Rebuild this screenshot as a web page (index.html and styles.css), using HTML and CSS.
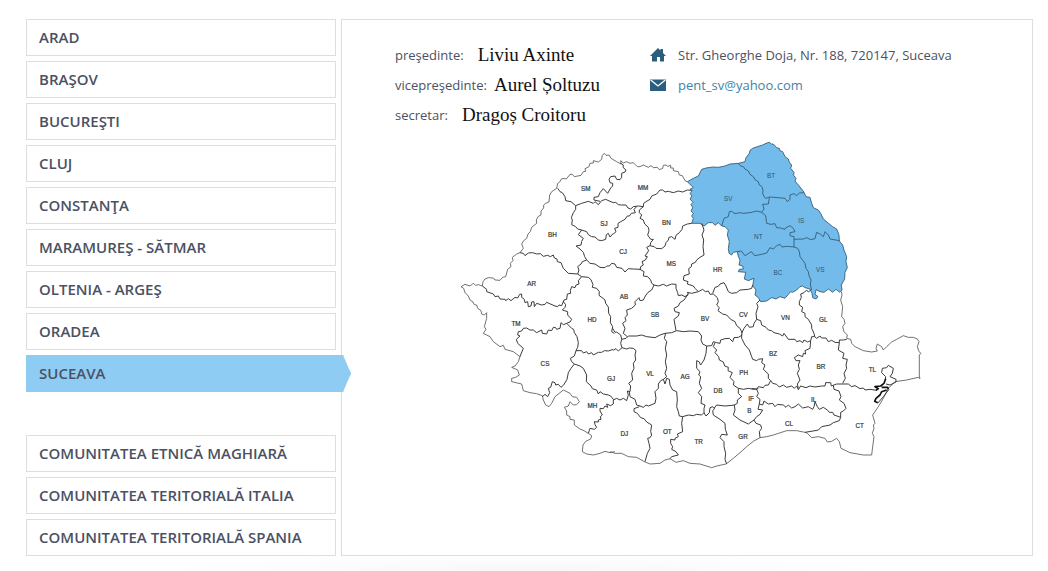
FILE: index.html
```html
<!DOCTYPE html>
<html lang="ro">
<head>
<meta charset="utf-8">
<meta name="viewport" content="width=device-width, initial-scale=1">
<title>Comunități - Suceava</title>
<link rel="stylesheet" href="styles.css">
</head>
<body>
<div class="page">
  <nav class="menu" aria-label="Comunități">
    <ul class="menu-list">
      <li><a class="menu-item" href="#arad">ARAD</a></li>
      <li><a class="menu-item" href="#brasov">BRAŞOV</a></li>
      <li><a class="menu-item" href="#bucuresti">BUCUREŞTI</a></li>
      <li><a class="menu-item" href="#cluj">CLUJ</a></li>
      <li><a class="menu-item" href="#constanta">CONSTANŢA</a></li>
      <li><a class="menu-item" href="#maramures">MARAMUREŞ - SĂTMAR</a></li>
      <li><a class="menu-item" href="#oltenia">OLTENIA - ARGEŞ</a></li>
      <li><a class="menu-item" href="#oradea">ORADEA</a></li>
      <li><a class="menu-item active" href="#suceava" aria-current="page">SUCEAVA</a></li>
    </ul>
    <ul class="menu-list">
      <li><a class="menu-item" href="#maghiara">COMUNITATEA ETNICĂ MAGHIARĂ</a></li>
      <li><a class="menu-item" href="#italia">COMUNITATEA TERITORIALĂ ITALIA</a></li>
      <li><a class="menu-item" href="#spania">COMUNITATEA TERITORIALĂ SPANIA</a></li>
    </ul>
  </nav>
  <main class="panel">
    <div class="info">
      <dl class="people">
        <div class="person"><dt>preşedinte:</dt><dd>Liviu Axinte</dd></div>
        <div class="person close"><dt>vicepreşedinte:</dt><dd>Aurel Șoltuzu</dd></div>
        <div class="person"><dt>secretar:</dt><dd>Dragoș Croitoru</dd></div>
      </dl>
      <address class="contact">
        <div class="contact-row">
          <svg class="icon" viewBox="0 0 16 14" aria-hidden="true"><path d="M8 0 10.5 2.4V1H13V5L16 8H14V13.5H10V9H7V13.5H2V8H0Z"/></svg>
          <span>Str. Gheorghe Doja, Nr. 188, 720147, Suceava</span>
        </div>
        <div class="contact-row">
          <svg class="icon" viewBox="0 0 16 14" aria-hidden="true"><path d="M0 1.5H16V13H0Z"/><path class="flap" d="M.7 2 8 8 15.3 2"/></svg>
          <a href="mailto:pent_sv@yahoo.com">pent_sv@yahoo.com</a>
        </div>
      </address>
    </div>
    <svg class="map" viewBox="0 0 1410 999" role="img" aria-label="Harta județelor">
      <!-- north-east counties -->
      <g transform="translate(825 -15)">
        <path class="region" d="M-128 140-110 130-95 123-85 103-72 99-52 96-35 97-15 93 0 87 25 85 45 80 48 68 58 55 60 46 68 40 85 34 98 30 108 25 118 22 124 27 130 27 140 38 148 40 150 47 158 50 165 65 175 72 178 82 185 90 182 100 192 112 191 121 198 130 195 138 205 150 215 162 222 172 228 185 240 187 245 205 250 218 265 225 272 235 280 252 292 262 308 275 320 282 327 300 328 318 338 330 342 345 350 365 348 380 352 398 345 412 344 432 334 450 336 465 330 472 318 463 308 472 295 462 282 472 270 470 258 464 255 478 264 485 258 492 248 488 246 475 240 462 225 458 218 453 210 455 200 465 188 472 182 470 175 478 165 490 150 485 138 492 125 488 110 498 92 500 85 488 75 480 78 465 68 452 72 430 55 437 43 432 47 412 25 410 28 403 40 402 38 393 27 390 30 375 25 365 22 350 10 352 5 360-3 355-5 340-2 320-8 300-5 285-15 275-25 273-35 263-45 271-52 263-65 263-78 273-90 265-115 265-110 250-115 243-110 235-117 228-112 218-117 208-111 202-120 192-114 183-120 176-114 167-120 163-110 157-115 153Z"/>
        <path class="border" d="M25 85 32 93 40 95 45 102 55 108 60 118 70 125 76 135 85 140 88 150 95 154 99 165 98 175 104 188M105 190 120 186 145 188 165 190 172 200 180 193 180 180 192 176 200 182 208 174 222 173M118 188 115 207 98 208 102 222 95 232 107 242 110 265 123 268 135 266 140 278 152 279 165 283 168 278 180 272 190 280 195 290 180 293 180 302 192 305 192 336 203 340 208 350 210 365 225 385 228 400 235 410 237 422 243 435 241 450 245 465M192 313 220 312 230 308 242 314 255 311 260 292 272 298 280 305 285 290 295 300 300 312 328 317M-25 273-18 250-5 245-2 230 5 229 15 236 28 233 40 235 60 233 80 228 95 232M22 350 34 348 45 362 55 356 64 350 74 362 95 358 110 354 120 338 130 342 140 332 150 328 156 336 170 334 192 336"/>
      </g>
      <!-- north-west -->
      <g>
        <path class="coast" d="M18 440 30 433 45 438 55 430 62 436 70 434 82 438 84 425 90 417 100 413 115 414 120 420 135 421 143 412 152 410 158 388 168 380 166 370 174 362 172 352 185 342 195 338 205 325 200 312 206 302 215 295 219 282 226 275 230 262 245 250 244 240 250 229 258 225 258 213 266 204 266 195 272 190 282 186 284 165 290 155 305 145 308 130 314 126 320 116 335 116 345 103 352 103 358 110 378 106 385 95 392 94 390 86 402 80 405 70 415 69 415 62 430 66 440 58 442 46 448 40 453 46 462 45 468 55 485 65"/>
        <path class="border" d="M308 145 315 155 322 158 330 170 332 182 348 185 362 197 380 190 400 184 415 190 420 185 430 194 440 182 452 178 465 184 475 188M362 197 362 208 355 218 349 233 352 240 350 254 362 260 368 267 380 270 395 275 400 284 410 290 420 291 430 300 440 302 452 298 454 284 460 280 465 291 475 280M380 270 370 284 385 295 380 304 378 315 363 318 375 327 385 337 389 350 395 360 382 365 378 372 368 380 372 390 368 402M195 338 205 340 210 347 220 339 233 338 245 342 256 341 265 349 278 346 286 350 295 345 298 354 306 357 307 365 318 368 325 385 340 400 368 402 380 410 370 422 372 432 363 435 360 443 350 440 346 452 347 460 337 462 335 478 327 480 325 486M380 410 400 412 408 419 414 434 412 442 425 445 433 455 432 466 444 475 450 480 452 490 460 501 461 520 467 530 466 548 473 560 470 575 478 580"/>
      </g>
      <!-- north-centre -->
      <g transform="translate(435 0)">
        <path class="coast" d="M50 65 63 72 62 62 70 69 80 65 90 70 100 68 112 80 120 80 130 75 145 82 153 77 160 83 172 82 178 89 188 85 190 76 198 75 203 79 212 76 212 84 220 84 220 92 235 95 238 105 247 107 255 122 262 125"/>
        <path class="border" d="M62 70 70 75 69 82 78 90 75 96 65 100 65 112 60 119 50 118 45 108 32 110 27 118 30 128 38 130 38 138 32 144 23 160 10 146 0 158-5 170-18 172-18 180 0 184M40 188 47 187 55 194 65 195 78 195 84 204 92 207 100 200 115 198 130 200 131 190 138 185 150 178 155 168 170 162 180 150 188 150 195 156 205 154 220 158 235 153 248 156 262 150 275 151M40 282 48 275 44 265 54 262 54 250 62 245 75 238 82 228 88 228 94 220 106 218 102 208 110 200M130 200 118 210 118 218 125 225 120 235 130 240 134 252 145 262 147 272 143 285 152 298 160 298 152 308 150 317 163 320 168 325 185 326 195 318 198 308 205 300 207 292 215 290 225 298 228 286 238 278 246 268 248 258 262 252 275 250M150 317 140 322 146 332 135 348 142 350 136 360 126 365 130 375 122 380 120 390M120 388 100 387 85 386 75 396 66 385 50 382 45 372 35 370 28 378 20 378 15 383 0 382-15 372-30 370-40 360M305 250 312 270 306 285 311 300 309 320 312 345 300 352 290 360 286 367 275 372 274 380 266 386 268 402 252 407 250 420 264 425 262 432 280 438 285 445 295 455M338 460 345 442 355 439 360 432 372 428 378 438 385 455 395 460 410 458 420 450 445 448 455 445 458 435M120 388 132 395 130 408 143 410 152 420 155 430 162 435"/>
      </g>
      <!-- south-west -->
      <g transform="translate(0 420)">
        <path class="coast" d="M18 20 26 25 30 38 40 48 45 60 54 66 58 74 65 75 68 85 78 92 80 102 88 105 95 98 95 115 88 140 93 148 85 160 105 170 115 185 135 200 145 196 150 208 175 215 195 230 190 245 180 258 170 262 188 270 193 285 182 292 170 295 170 305 200 312 205 332 225 338 245 341 262 347 265 360 272 375 282 380 290 370 300 350 325 330 345 340 352 350 365 352 373 365 365 374 355 375 345 365 340 378 328 382 335 393 335 405 345 410 345 418 358 420 358 435 375 447 387 452 400 460 410 467 407 477 392 484 384 495 382 515 395 522 415 525 435 520 450 514 465 518 480 515"/>
        <path class="border" d="M82 18 95 28 95 35 115 42 120 50 130 48 135 57 150 58 152 62 160 56 168 62 180 52 188 54 194 43 200 42 200 52 208 58 210 68 218 65 220 80 228 78 230 66 237 65 238 80 245 70 260 75 270 73 275 67 300 78 308 80 312 75 320 77 325 65 332 74 330 82 322 90 338 95 338 105 350 118 345 126 335 130 325 134 318 128 315 145 305 148 302 143 295 142 290 152 280 150 275 162 262 160 260 150 245 158 235 150 225 150 215 144 205 145 200 153 190 155 188 165 195 168 184 178 188 190 205 205 198 222 195 230M335 130 350 145 356 148 358 158 366 170 370 188 368 202 363 212 380 212 385 219 395 215 400 222 410 218 415 225 430 217 440 217 448 212 460 213 475 208M363 212 358 228 346 235 350 245 358 252 348 265 340 278 336 298 326 315 318 322 310 313 302 315 300 308 292 305 287 322 280 325 284 338 278 350 270 343 262 350M358 252 375 258 385 265 395 285 394 305 408 318 412 326 425 330 430 342 435 335 445 342 460 345 467 348 475 358 475 372 467 377 455 372 458 382 450 378 445 386 435 385 435 393 442 405 436 410 438 418 430 420 430 426 418 425 420 434 425 442 418 448 405 445 400 460"/>
      </g>
      <!-- south-centre -->
      <g transform="translate(435 420)">
        <path class="coast" d="M30 515 45 520 65 520 85 530 110 532 133 545 150 552 180 550 195 540 210 536 228 547 250 542 270 550 300 552 335 563 350 558 378 552 400 535 420 518 440 500 460 484 480 473"/>
        <path class="border" d="M38 145 45 157 50 156 62 165 65 178 62 190 66 203M40 211 48 206 55 213 66 203 80 207 88 204 100 205 108 212 105 225 107 240 100 250 102 265 95 280 98 300 86 310 92 318 90 335 82 333 85 345 80 362 70 355 60 360 50 355 40 360M88 335 90 350 105 358 110 375 120 378 130 382 138 375 145 378 165 370 168 355 165 335 175 325 175 312 182 302 190 298M118 380 102 386 102 395 112 400 122 413 132 416 140 426 155 435 152 455 155 465 150 473 143 475 147 490 150 505 142 520 135 545M65 178 78 175 85 168 110 168 125 165 140 170 165 173 180 165 195 160 215 158 230 152 250 155 270 153 295 155 305 168 303 180 308 192 320 198M197 160 193 175 200 185 196 205 200 225 196 245 200 265 195 280 200 290 190 298 195 312 200 295 208 298 210 315 218 330 230 335 232 360 230 380 235 395 238 408 248 410 265 405 280 407 290 403 305 405 312 398 312 385 315 375 303 370 305 350 295 338 305 325 298 310 302 290 296 285 300 275 290 265 290 242 297 245 302 255 312 240 318 220 320 198M248 410 245 430 248 455 232 462 235 470 225 475 225 480 212 478 212 490 218 500 215 508 228 515 235 525 215 530 210 536M312 398 318 408 328 398 330 383 338 380 342 385 350 375 375 378 405 375M345 385 338 392 340 405 360 418 375 430 376 448 382 465 365 463 360 473 372 485 372 500 377 520 375 538 380 552M162 15 155 30 143 38 136 48 130 60 120 62 117 53 105 65 106 75 95 85 80 90 82 105 75 113 78 122 68 130 75 145 70 160 82 170M162 15 175 18 190 13 200 18 215 12 228 13 228 25 233 38 235 47 245 45 255 50 265 42 262 37 275 40 295 35M295 35 308 28 316 35 325 33 330 43 340 42M265 42 252 60 240 68 235 78 222 85 225 95 238 98 235 108 222 118 225 135 228 152M340 42 352 53 355 65 350 75 358 83 354 92 368 102 380 105 392 118 405 125 410 137 420 145 427 160M320 198 335 197 340 185 350 188 360 190 362 180 375 176 388 175 398 185 402 173 415 172 427 165M345 188 340 200 350 210 345 218 356 230 358 240 370 246 374 258 385 262 384 272 397 278 390 292 402 305 400 315 415 325 430 328 445 325 460 328 475 326M415 325 415 340 425 350 412 360 412 370 403 375 405 390 400 405 420 420 445 432"/>
      </g>
      <!-- south-east -->
      <g transform="translate(855 420)">
        <path class="coast" d="M60 473 80 470 100 465 140 452 170 452 195 457 202 460 215 473 235 470 255 475 262 486 275 484 290 475 298 485 303 505 330 518 370 525 395 525 398 500 402 470 397 460 402 445 400 435 405 430 398 405 415 380 430 355 445 325 465 305 500 300 535 292 540 296 538 288 538 225 543 220 537 215 532 200 537 185 532 177 520 172 505 172 490 167 470 178 455 186 440 200 430 210 425 200 412 192 408 205 412 213 395 216 370 212 345 200 335 190 332 178 320 175 322 165 312 155 308 140 315 130 312 118 305 110 308 80 302 60 306 45 304 35"/>
        <path class="border" d="M5 160 12 145 22 132 28 142 40 140 42 130 50 118 48 100 54 80 50 70 60 60M5 160 5 175 15 195 28 210 35 230 38 238 50 242 55 238 68 236 65 248 75 255 70 268 85 282 85 295 92 302 85 315 75 316 70 323 55 320 50 328 35 325M50 118 62 122 65 135 78 142 85 150 95 152 102 158 118 162 128 168 132 160 145 178 165 178 170 185 180 182 188 188 192 180 203 186 212 182 215 170 224 170 222 160 215 145 215 135 205 118 195 110 195 100 185 95 188 82 178 75 178 65 184 52 182 42 192 38 200 30 205 36 212 30M224 170 230 175 240 168 245 174 258 174 265 185 275 181 285 187 298 188 298 180 310 180 320 178M212 182 210 205 195 212 197 222 190 220 188 230 175 225 163 233 168 242 180 242 175 255 178 268 172 280 180 300 172 312 175 325M298 188 295 210 312 220 308 235 322 238 318 255 320 265 312 280 316 295 308 310M92 302 98 310 110 313 118 321 130 315 140 322 155 318 163 325 170 318 175 329 182 318 198 323 210 318 225 321 245 318 255 318 257 308 272 308 274 318 290 312 308 312 325 312 335 320 345 317 360 326 370 324 375 330 390 328 410 331M280 316 282 328 297 333 303 350 298 360 312 370 318 385 310 393 302 397 302 412M58 372 68 375 72 363 85 372 98 370 105 380 112 373 130 375 138 382 145 375 155 384 165 380 175 372 188 384 205 380 218 388 222 380 225 365 232 380 238 388 250 382 262 390 268 397 278 397 282 405 302 412 298 422 280 428 270 435 245 440 235 450 225 452 195 457M50 328 55 340 50 350 60 358 58 372 54 388 68 390 60 403 50 410 42 420 25 432M42 420 48 430 62 435 65 445 58 455 60 473"/>
        <path class="border" d="M436 300 437 290 425 278 427 265 440 263 445 256 460 265 457 280 450 290 468 298 468 306 450 315 438 312M447 328 430 350 413 370"/>
        <path class="delta" d="M437 296 432 310 422 318 405 320 415 326 408 331M425 322 443 322 445 328M440 330 425 335 420 345 408 355 404 364 413 368"/>
      </g>
      <g class="labels">
        <text x="392" y="154">SM</text><text x="564" y="151">MM</text><text x="447" y="258">SJ</text><text x="292" y="291">BH</text>
        <text x="634" y="256">BN</text><text x="504" y="343">CJ</text><text x="649" y="377">MS</text><text x="788" y="397">HR</text>
        <text x="230" y="438">AR</text><text x="507" y="477">AB</text><text x="183" y="558">TM</text><text x="411" y="546">HD</text>
        <text x="600" y="531">SB</text><text x="750" y="543">BV</text><text x="865" y="531">CV</text><text x="991" y="541">VN</text>
        <text x="1105" y="545">GL</text><text x="270" y="679">CS</text><text x="468" y="722">GJ</text><text x="585" y="707">VL</text>
        <text x="690" y="718">AG</text><text x="866" y="706">PH</text><text x="954" y="648">BZ</text><text x="1098" y="687">BR</text>
        <text x="1252" y="696">TL</text><text x="412" y="804">MH</text><text x="789" y="758">DB</text><text x="888" y="783">IF</text>
        <text x="883" y="818">B</text><text x="1076" y="785">IL</text><text x="508" y="887">DJ</text><text x="637" y="882">OT</text>
        <text x="731" y="911">TR</text><text x="864" y="898">GR</text><text x="1002" y="857">CL</text><text x="1214" y="863">CT</text>
      </g>
      <g class="labels labels-active">
        <text x="948" y="115">BT</text><text x="820" y="182">SV</text><text x="1039" y="248">IS</text>
        <text x="910" y="298">NT</text><text x="969" y="406">BC</text><text x="1096" y="395">VS</text>
      </g>
    </svg>
  </main>
</div>
<div class="page-shadow"></div>
</body>
</html>
```

FILE: styles.css
```css
* { box-sizing: border-box; }

body {
  margin: 0;
  background: #fff;
  color: #4b5163;
  font-family: "Open Sans", sans-serif;
  font-size: 13px;
  font-feature-settings: "locl" 0;
}

.page {
  display: grid;
  grid-template-columns: 310px 1fr;
  gap: 5px;
  padding: 19px 15px 0 26px;
}

.menu {
  display: flex;
  flex-direction: column;
  gap: 43px;
}

.menu-list {
  display: flex;
  flex-direction: column;
  gap: 5px;
  margin: 0;
  padding: 0;
  list-style: none;
}

.menu-item {
  display: block;
  padding: 0 12px;
  border: 1px solid #dedede;
  color: inherit;
  font-size: 15px;
  font-weight: 600;
  line-height: 35px;
  text-decoration: none;
}

.menu-item.active {
  position: relative;
  z-index: 1;
  margin-right: -15px;
  border-color: #8fccf4;
  background: #8fccf4;
  clip-path: polygon(0 0, calc(100% - 8px) 0, 100% 50%, calc(100% - 8px) 100%, 0 100%);
}

.panel {
  padding: 20px 53px;
  border: 1px solid #dedede;
}

.info {
  display: grid;
  grid-template-columns: 255px 1fr;
}

.people { margin: 0; }

.person {
  display: flex;
  align-items: center;
  gap: 14px;
  height: 30px;
}

.person.close { gap: 7px; }

.person dd {
  margin: 0;
  color: #111;
  font-family: "Liberation Serif", serif;
  font-size: 19px;
}

.contact { font-style: normal; }

.contact-row {
  display: flex;
  align-items: center;
  gap: 12px;
  height: 30px;
}

.contact-row a {
  color: #3b83ab;
  text-decoration: none;
}

.icon {
  width: 16px;
  height: 14px;
  fill: #2b5d7c;
}

.icon .flap {
  fill: none;
  stroke: #fff;
  stroke-width: 1.3;
}

.map {
  display: block;
  width: 100%;
  max-width: 470px;
  margin: 10px 0 0 60px;
}

.region {
  fill: #72bbea;
  stroke: #2f5570;
  stroke-width: 2.5;
}

.border,
.coast,
.delta {
  fill: none;
  stroke: #3c3c3c;
  stroke-width: 3;
  stroke-linejoin: round;
}

.region + .border { stroke: #2f5570; stroke-width: 2.5; }
.coast { stroke: #555; stroke-width: 2.5; }
.delta { stroke: #111; stroke-width: 5; }

.labels {
  fill: #333;
  stroke: #333;
  stroke-width: 0.6;
  font-family: "Liberation Sans", Arial, sans-serif;
  font-size: 19px;
  text-anchor: middle;
}

.labels-active {
  fill: #2f5570;
  stroke: none;
}

.page-shadow {
  height: 15px;
  margin: 0 130px;
  background: radial-gradient(ellipse at bottom, #f7f7f7, #fff 70%);
}
```
